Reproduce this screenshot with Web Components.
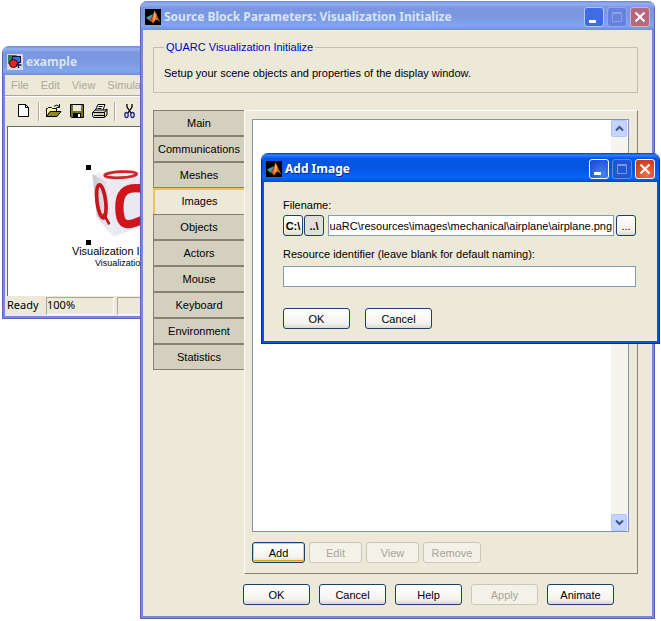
<!DOCTYPE html>
<html lang="en">
<head>
<meta charset="utf-8">
<title>Source Block Parameters</title>
<style>
  html, body { height: 100%; margin: 0; background: #fff; }
  body { font: 11px/14px "Liberation Sans", Arial, sans-serif; color: #000; overflow: hidden; }
</style>
</head>
<body>
<desk-top></desk-top>

<script>
const define = (name, html, setup) => {
  const template = document.createElement('template');
  template.innerHTML = html;
  customElements.define(name, class extends HTMLElement {
    constructor() {
      super();
      this.attachShadow({ mode: 'open' }).append(template.content.cloneNode(true));
    }
    connectedCallback() { if (setup) setup(this, this.shadowRoot); }
  });
};

/* MATLAB membrane logo */
define('matlab-icon', `
<style>:host { display: block; width: 16px; height: 16px; } svg { display: block; }</style>
<svg width="16" height="16" viewBox="0 0 16 16" aria-hidden="true">
  <rect width="16" height="16" fill="#000"/>
  <path d="M1 8.500 5 6.500 8 5 6.500 10 4 11.500Z" fill="#4a9ab4"/>
  <path d="M4 11.500 7 7.500 9 3 8.500 9 6.500 13Z" fill="#9a3f22"/>
  <path d="M9.500 1.500 11.500 5 13 9 15.500 13.500 12.500 11 10.500 11 8 14.500 6 12 8 8Z" fill="#e0601c"/>
  <path d="M9.500 2 10.800 6 10.300 10 8.300 13 8.600 7Z" fill="#ffb45c"/>
</svg>`);

define('simulink-icon', `
<style>:host { display: block; width: 16px; height: 16px; } svg { display: block; }</style>
<svg width="16" height="16" viewBox="0 0 16 16" aria-hidden="true">
  <rect width="16" height="16" fill="#d8d8dc"/>
  <path d="M1 1h9L3 10H1Z" fill="#158a53"/>
  <rect x="5.500" y="2.500" width="8" height="6" fill="#2f6fe0" stroke="#113"/>
  <circle cx="6.500" cy="9.500" r="4" fill="#e02424" stroke="#500"/>
  <path d="M11.500 8v6M9 11h5.500" stroke="#111a70" stroke-width="1.500"/>
</svg>`);

define('caption-buttons', `
<style>
  :host { display: flex; gap: 3px; }
  button { width: 20px; height: 20px; padding: 0; border: 1px solid #fff; border-radius: 3px; }
  svg { display: block; margin: auto; }
  .min { background: radial-gradient(circle at 70% 80%, #4a80f4, #2656dc 70%, #1c45c4); }
  .max { background: #1f55d6; border-color: #5d8bea; }
  .max svg { opacity: .4; }
  .close { background: radial-gradient(circle at 60% 80%, #f0704c, #dc4426 60%, #c23016); }
  :host([inactive]) .min { border-color: #b4c6f4; background: #3f6be6; }
  :host([inactive]) .max { background: #6682de; border-color: #91a8ee; }
  :host([inactive]) .max svg { opacity: .25; }
  :host([inactive]) .close { background: #b8687c; border-color: #d3b0d2; }
</style>
<button class="min" aria-label="Minimize"><svg width="18" height="18"><path d="M4 12h7v3H4z" fill="#fff"/></svg></button>
<button class="max" aria-label="Maximize" disabled><svg width="18" height="18"><path d="M4.500 4.500h9v9h-9zM4 5.500h10" fill="none" stroke="#fff"/></svg></button>
<button class="close" aria-label="Close"><svg width="18" height="18"><path d="M4.500 4.500l9 9M13.500 4.500l-9 9" stroke="#fff" stroke-width="2"/></svg></button>`);

/* Window frame: title bar plus body */
define('xp-window', `
<style>
  :host { display: flex; flex-direction: column; box-sizing: border-box;
    border: solid #0a2ba8; border-width: 0 1px 1px; border-radius: 7px 7px 0 0; overflow: hidden; background: #ece9d8; }
  header { flex: none; display: flex; align-items: center; gap: 3px; height: 29px; box-sizing: border-box;
    padding: 2px 4px 0; color: #fff;
    background: linear-gradient(#0a3fc4, #2f82f8 8%, #0556e4 18%, #0554e3 50%, #0765fb 85%, #0546d0); }
  h1 { flex: 1; margin: 0; font: bold 12px/20px "Noto Sans", "Open Sans", sans-serif; white-space: nowrap;
    text-shadow: 1px 1px #0a2a8c; }
  main { flex: 1; min-height: 0; display: flex; flex-direction: column;
    border: solid #0b50de; border-width: 0 2px 2px; }
  :host([inactive]) { border-color: #5f62bc; }
  :host([inactive]) header { color: #d8e4f8; background: linear-gradient(#7387d8, #93b0f0 10%, #7b97e0 22%, #7b97e0 50%, #80a6ee 85%, #758be0); }
  :host([inactive]) h1 { text-shadow: none; }
  :host([inactive]) main { border-color: #7b88da; }
</style>
<header><slot name="icon"></slot><h1></h1><caption-buttons></caption-buttons></header>
<main><slot></slot></main>`, (el, root) => {
  root.querySelector('h1').textContent = el.getAttribute('caption');
  root.querySelector('caption-buttons').toggleAttribute('inactive', el.hasAttribute('inactive'));
});

define('xp-button', `
<style>
  :host { display: block; width: 67px; }
  button { display: block; width: 100%; height: 21px; box-sizing: border-box; padding: 0; font: inherit; color: #000;
    border: 1px solid #1c3f6e; border-radius: 3px; white-space: nowrap;
    background: linear-gradient(#fff, #f4f3ee 75%, #dcd8cc); }
  :host([focused]) button { box-shadow: inset 0 0 0 1px #f8c860, inset 0 -2px #e5a01a; }
  :host([pressed]) button { background: #e2dfd6; }
  :host([strong]) button { font-weight: bold; }
  button:disabled { color: #a8a598; border-color: #c9c7ba; background: #f3f1e8; }
</style>
<button><slot></slot></button>`, (el, root) => {
  const button = root.querySelector('button');
  button.disabled = el.hasAttribute('disabled');
  if (el.title) button.setAttribute('aria-label', el.title);
});

define('model-toolbar', `
<style>
  :host { display: flex; align-items: center; height: 30px; padding-left: 10px; gap: 6px; border-top: 1px solid #aca899;
    box-shadow: inset 0 1px #fff; }
  button { width: 17px; height: 16px; padding: 0; border: 0; background: none; }
  svg { display: block; }
  hr { width: 1px; height: 19px; margin: 0; border: 0; background: #aca899; box-shadow: 1px 0 #fff; }
</style>
<button aria-label="New"><svg width="17" height="16"><path d="M3.500 1.500h7l3 3v9h-10zM10.500 1.500v3h3" fill="#fff" stroke="#000"/></svg></button>
<hr>
<button aria-label="Open"><svg width="17" height="16"><path d="M1.500 14V5.500h1l1-1h3l1 1h4V9" fill="#fff59a" stroke="#000"/><path d="M1.500 13.500 5 8.500h11l-4 5z" fill="#8c8a1c" stroke="#000"/><path d="M9 3.500q3-3 5 0M14.500 1v3.500H11.500" fill="none" stroke="#000"/></svg></button>
<button aria-label="Save"><svg width="17" height="16"><path d="M2.500 1.500h13v13h-12l-1-1z" fill="#77751c" stroke="#000"/><path d="M5 2h8v6H5z" fill="#ece9d8"/><path d="M5 10h8v4H5z" fill="#000"/><path d="M10 11h2v3h-2z" fill="#fff"/></svg></button>
<button aria-label="Print"><svg width="17" height="16"><path d="M4.500 7 7 1.500h7L12 7" fill="#fff" stroke="#000"/><path d="M7.500 3.500h4M6.500 5.500h4" stroke="#000"/><path d="M1.500 9.500 4 7h10l2-1v6l-3 2.500H2.500l-1-2z" fill="#d9d6c6" stroke="#000"/><path d="M2 9.500h11.500V14M13 9.500 16 7M3 12.500h10" fill="none" stroke="#000"/><path d="M8 11h3" stroke="#c8c414"/></svg></button>
<hr>
<button aria-label="Cut"><svg width="17" height="16"><path d="M6 1v3l4 6M11 1v3l-4 6" fill="none" stroke="#000" stroke-width="1.300"/><ellipse cx="5.500" cy="12" rx="1.700" ry="2.500" fill="none" stroke="#22228c" stroke-width="1.300"/><ellipse cx="11.500" cy="12" rx="1.700" ry="2.500" fill="none" stroke="#22228c" stroke-width="1.300"/></svg></button>`);

/* Simulink block placed on the free model canvas */
define('model-block', `
<style>
  :host { display: block; width: 140px; color: #000; }
  svg { display: block; margin-left: 14px; }
  p { margin: 0; font: 11px/12px "Liberation Sans", sans-serif; white-space: nowrap; }
  p + p { margin-left: 23px; font-size: 9px; }
</style>
<svg width="90" height="80" viewBox="0 0 270 240" role="img" aria-label="Cube block">
  <defs>
    <linearGradient id="side"><stop offset="0" stop-color="#c9c7d2"/><stop offset="1" stop-color="#f0eff4"/></linearGradient>
  </defs>
  <path d="M0 0h15v15H0zM0 225h15v15H0z"/>
  <path d="M19 28 92 14 190 24 250 34 64 50Z" fill="#f0eef2"/>
  <path d="M19 28 64 50 82 215 32 155Z" fill="url(#side)"/>
  <path d="M64 50 250 28 220 165 82 215Z" fill="#eae8f0"/>
  <ellipse cx="104" cy="29" rx="48" ry="9" transform="rotate(-3 104 29)" fill="none" stroke="#d4222a" stroke-width="8"/>
  <ellipse cx="46" cy="109" rx="13" ry="50" transform="rotate(-7 46 109)" fill="none" stroke="#c8141c" stroke-width="11"/>
  <path d="M52 145 70 178" stroke="#c8141c" stroke-width="8"/>
  <path d="M160 70C116 66 100 85 100 128C101 172 112 186 150 172L186 158C200 130 198 75 180 64Z" fill="none" stroke="#d0141c" stroke-width="25"/>
</svg>
<p>Visualization Initialize</p>
<p>Visualization</p>`);

define('model-window', `
<style>
  :host { display: block; }
  xp-window { height: 100%; }
  nav { display: flex; gap: 12px; height: 20px; padding-left: 6px; align-items: center; }
  nav button { padding: 0; border: 0; background: none; font: inherit; color: #aca899; }
  .canvas { position: relative; flex: 1; overflow: hidden; background: #fff; margin-left: 2px; border: solid #6d6b60; border-width: 1px 0 0 1px; }
  model-block { position: absolute; left: 64px; top: 38px; }
  footer { display: flex; gap: 3px; height: 18px; padding: 1px 0 1px 2px; font: 11px/16px "Noto Sans", sans-serif; }
  footer span:first-child { width: 36px; }
  footer span + span { width: 66px; border: 1px solid; border-color: #aca899 #fff #fff #aca899; line-height: 14px; }
</style>
<xp-window caption="example" inactive>
  <simulink-icon slot="icon"></simulink-icon>
  <nav><button>File</button><button>Edit</button><button>View</button><button>Simulation</button></nav>
  <model-toolbar></model-toolbar>
  <div class="canvas"><model-block></model-block></div>
  <footer><span>Ready</span><span>100%</span><span></span><span></span></footer>
</xp-window>`);

define('tab-strip', `
<style>
  :host { display: block; width: 91px; }
  div { display: flex; flex-direction: column; }
  button { height: 26px; box-sizing: border-box; padding: 0; font: inherit; color: #000; background: #d4d0c0;
    border: solid #85826f; border-width: 1px 0 1px 1px; }
  button[aria-selected=true] { background: #ece9d8; border: solid #f6c24e; border-width: 2px 0 0 2px; padding-bottom: 2px; }
</style>
<div role="tablist"></div>`, (el, root) => {
  const list = root.querySelector('div');
  for (const name of ['Main', 'Communications', 'Meshes', 'Images', 'Objects', 'Actors', 'Mouse', 'Keyboard', 'Environment', 'Statistics']) {
    const tab = document.createElement('button');
    tab.textContent = name;
    tab.setAttribute('role', 'tab');
    tab.setAttribute('aria-selected', name === 'Images');
    list.append(tab);
  }
});

define('list-box', `
<style>
  :host { display: flex; justify-content: flex-end; background: #fff; border: 1px solid #8296b0; }
  div { display: flex; flex-direction: column; justify-content: space-between; width: 17px; background: #f5f4ee; }
  button { width: 16px; height: 17px; padding: 0; border: 1px solid #b2c6f6; border-radius: 2px; background: #c4d4fc; }
  svg { display: block; margin: auto; }
</style>
<div>
  <button aria-label="Scroll up"><svg width="9" height="7"><path d="M1 5.500 4.500 2 8 5.500" fill="none" stroke="#405684" stroke-width="2"/></svg></button>
  <button aria-label="Scroll down"><svg width="9" height="7"><path d="M1 1.500 4.500 5 8 1.500" fill="none" stroke="#405684" stroke-width="2"/></svg></button>
</div>`);

define('parameters-dialog', `
<style>
  :host { display: block; }
  xp-window { height: 100%; }
  .body { flex: 1; min-height: 0; display: flex; flex-direction: column; padding: 10px 14px 11px 10px; }
  fieldset { flex: none; margin: 0; padding: 12px 10px; border: 1px solid #c2bfb0; }
  legend { padding: 0 2px; color: #0000c8; }
  p { margin: 0; }
  .tabs { flex: 1; min-height: 0; display: flex; margin-top: 17px; }
  .panel { flex: 1; display: flex; flex-direction: column; gap: 10px; padding: 8px 8px 10px 7px;
    border: 1px solid; border-color: #fff #85826f #85826f #fff; }
  list-box { flex: 1; }
  .row { display: flex; gap: 4px; }
  .row xp-button { width: 53px; }
  .row xp-button:last-child { width: 58px; }
  .actions { display: flex; justify-content: flex-end; gap: 9px; padding: 10px 24px 0 0; }
</style>
<xp-window caption="Source Block Parameters: Visualization Initialize" inactive>
  <matlab-icon slot="icon"></matlab-icon>
  <div class="body">
    <fieldset><legend>QUARC Visualization Initialize</legend><p>Setup your scene objects and properties of the display window.</p></fieldset>
    <div class="tabs">
      <tab-strip></tab-strip>
      <div class="panel">
        <list-box></list-box>
        <div class="row"><xp-button focused>Add</xp-button><xp-button disabled>Edit</xp-button><xp-button disabled>View</xp-button><xp-button disabled>Remove</xp-button></div>
      </div>
    </div>
    <div class="actions"><xp-button>OK</xp-button><xp-button>Cancel</xp-button><xp-button>Help</xp-button><xp-button disabled>Apply</xp-button><xp-button>Animate</xp-button></div>
  </div>
</xp-window>`);

define('image-dialog', `
<style>
  :host { display: block; }
  .body { display: flex; flex-direction: column; padding: 16px 21px 12px 19px; }
  label { display: block; }
  input { display: block; flex: 1; min-width: 0; height: 21px; box-sizing: border-box; margin: 0; padding: 0 1px; font: inherit; color: #000;
    background: #fff; border: 1px solid #7f9db9; border-radius: 0; outline: 0; }
  #file { text-align: right; margin: 0 1px 0 3px; }
  .line { display: flex; gap: 1px; margin: 3px 0 11px; }
  .line xp-button { width: 20px; }
  .actions { display: flex; gap: 15px; }
  #resource { flex: none; width: 100%; margin: 5px 0 21px; }
</style>
<xp-window caption="Add Image">
  <matlab-icon slot="icon"></matlab-icon>
  <div class="body">
    <label for="file">Filename:</label>
    <div class="line">
      <xp-button strong>C:\\</xp-button><xp-button strong pressed>..\\</xp-button>
      <input id="file" value="QuaRC\\resources\\images\\mechanical\\airplane\\airplane.png">
      <xp-button title="Browse">...</xp-button>
    </div>
    <label for="resource">Resource identifier (leave blank for default naming):</label>
    <input id="resource">
    <div class="actions"><xp-button>OK</xp-button><xp-button>Cancel</xp-button></div>
  </div>
</xp-window>`, (el, root) => {
  const file = root.querySelector('#file');
  file.scrollLeft = file.scrollWidth;
});

/* Windows float freely over the desktop */
define('desk-top', `
<style>
  :host { display: block; position: relative; height: 100%; min-height: 480px; }
  model-window, parameters-dialog, image-dialog { position: absolute; }
  model-window { left: 2px; top: 46px; width: 40%; height: 273px; }
  parameters-dialog { left: 140px; right: 6px; top: 1px; bottom: 2px; }
  image-dialog { left: 261px; right: 1px; top: 153px; }
</style>
<model-window></model-window>
<parameters-dialog></parameters-dialog>
<image-dialog></image-dialog>`);
</script>
</body>
</html>
